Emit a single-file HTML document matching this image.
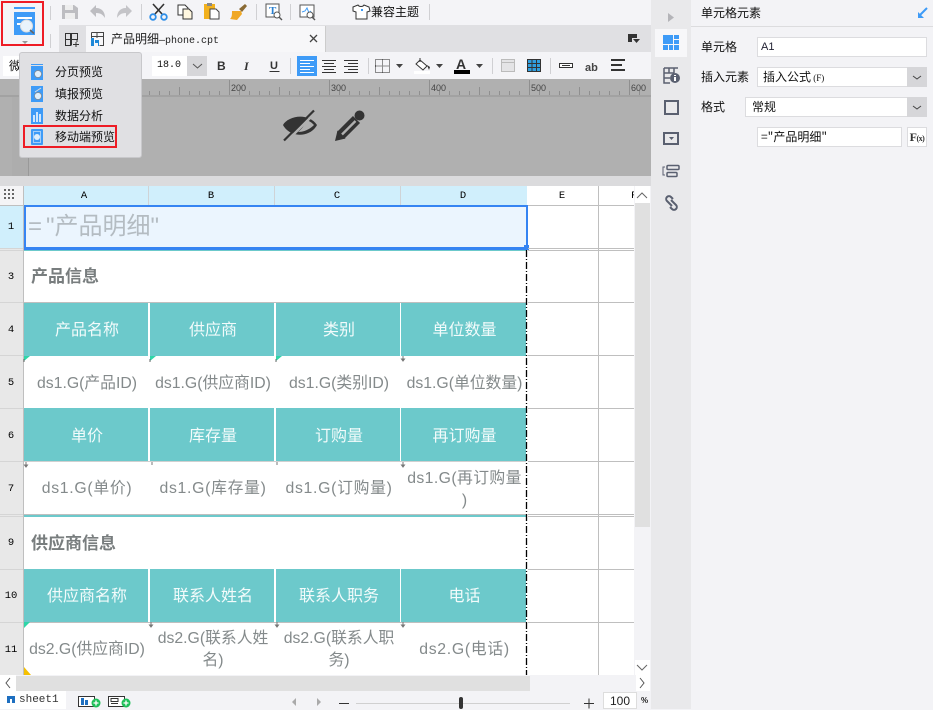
<!DOCTYPE html>
<html><head><meta charset="utf-8">
<style>
html,body{margin:0;padding:0;width:933px;height:709px;overflow:hidden;background:#f3f3f6;font-family:"Liberation Sans","Noto Sans CJK SC",sans-serif}
div,span{position:absolute;box-sizing:border-box}
svg{position:absolute;overflow:visible}
.r{background:#bfbfbf}
.h{left:24px;width:502px;height:53px;background:#6cc9cb}
.sep{width:2px;background:#fff}
.c{text-align:center;white-space:nowrap;color:#848a8b;font-size:15.8px;line-height:20px;height:20px;padding-left:2px}
.w{text-align:center;white-space:nowrap;color:#f2fbfb;font-size:16px;line-height:20px;height:20px;padding-left:2px}
.rn{left:0;width:22px;text-align:center;font:10.5px/14px "Liberation Mono",monospace;color:#000;height:14px}
.cn{top:190px;text-align:center;font:10.5px/12px "Liberation Mono",monospace;color:#000;height:12px}
.b{font-weight:700;font-size:17px;color:#787d7e;white-space:nowrap;line-height:20px;height:20px}
.vs{width:1px;background:#d0d0d3}
.m{font:12px/16px "WenQuanYi Zen Hei","Noto Sans CJK SC",sans-serif;color:#111;height:16px;white-space:nowrap}
.lab{font:12px/16px "WenQuanYi Zen Hei","Noto Sans CJK SC",sans-serif;color:#111;height:16px;white-space:nowrap}
.rul{top:83px;font:9px/10px "Liberation Sans",sans-serif;color:#444;height:10px}
.sel{background:#fff;border:1px solid #dcdcdf}
.ar{background:#d6d6d9}
</style></head><body>

<!-- top toolbar -->
<div style="left:0;top:0;width:651px;height:25px;background:#f4f4f7"></div>
<div style="left:59px;top:25px;width:592px;height:27px;background:#e0e0e3"></div>
<div style="left:0;top:25px;width:59px;height:27px;background:#f4f4f7"></div>
<div style="left:86px;top:26px;width:240px;height:27px;background:#f7f7f9;border-right:1px solid #ccc"></div>
<div style="left:0;top:52px;width:651px;height:27px;background:#f4f4f7"></div>

<!-- preview icon -->
<div style="left:1px;top:1px;width:43px;height:45px;border:2px solid #ee1c25;background:#f4f4f7"></div>
<div style="left:14px;top:7px;width:21px;height:2px;background:#3e9bf7"></div>
<div style="left:14px;top:12px;width:21px;height:23px;background:#3e9bf7"></div>
<div style="left:17px;top:17px;width:15px;height:1.5px;background:#fff"></div>
<div style="left:17px;top:23px;width:5px;height:1.5px;background:#fff"></div>
<svg style="left:0;top:0" width="50" height="50"><circle cx="26.500" cy="26" r="6" fill="#e9f3fc" stroke="#ddd" stroke-width="1"/><path d="M30 30l4 3.500" stroke="#666" stroke-width="1.600"/><path d="M22 41h6l-3 3z" fill="#999"/></svg>
<div class="vs" style="left:50px;top:6px;height:14px"></div>
<div class="vs" style="left:50px;top:34px;height:14px"></div>

<!-- toolbar icons -->
<svg style="left:0;top:0" width="480" height="25">
<path d="M62 5h12l4 3v11H62z" fill="#bdbdc1"/><rect x="65" y="5" width="8" height="5" fill="#eee"/><rect x="65" y="13" width="10" height="6" fill="#eee"/>
<path d="M90 11l6-6v3c6 0 9 4 9 10-2-3-4-5-9-5v4z" fill="#bdbdc1"/>
<path d="M132 11l-6-6v3c-6 0-9 4-9 10 2-3 4-5 9-5v4z" fill="#c4c4c8"/>
<path d="M153 4l9 10M164 4l-9 10" stroke="#333" stroke-width="1.600" fill="none"/>
<circle cx="153" cy="17" r="2.800" fill="none" stroke="#2f8fe8" stroke-width="1.800"/><circle cx="164" cy="17" r="2.800" fill="none" stroke="#2f8fe8" stroke-width="1.800"/>
<path d="M178 5h7l3 3v7h-10z" fill="#fff" stroke="#333"/><path d="M183 9h6l3 3v7h-9z" fill="#fff7e0" stroke="#333"/>
<path d="M204 4h11v15h-11z" fill="#f2b11d"/><rect x="207" y="3" width="5" height="3" fill="#888"/><path d="M210 9h6l3 3v7h-9z" fill="#fff" stroke="#444"/>
<path d="M239 9l6-5 2 2-5 6z" fill="#8a6a34"/><path d="M232 11l9 0 1 3-5 6-7-1c2-2 2-4 2-8z" fill="#f0a825"/>
<rect x="266" y="4" width="13" height="13" fill="#fff" stroke="#555"/><text x="269" y="14" font-family="Liberation Serif" font-size="11" font-weight="700" fill="#2a7fd0">T</text><circle cx="277" cy="15" r="3" fill="#fff" stroke="#555"/><path d="M279 17l3 3" stroke="#555" stroke-width="1.400"/>
<rect x="300" y="5" width="14" height="12" fill="#fff" stroke="#555"/><path d="M302 12l3-1 2-3 2 5 2-2" stroke="#3e9bf7" fill="none"/><circle cx="310" cy="15" r="3" fill="#fff" stroke="#555"/><path d="M312 17l3 3" stroke="#555" stroke-width="1.400"/>
<path d="M353 7l5-2c1 2 5 2 6 0l5 2 1 4-3 1v7h-11v-7l-3-1z" fill="#fff" stroke="#333"/><rect x="361" y="9" width="2" height="2" fill="#3e9bf7"/>
</svg>
<div class="vs" style="left:141px;top:4px;height:16px"></div>
<div class="vs" style="left:256px;top:4px;height:16px"></div>
<div class="vs" style="left:290px;top:4px;height:16px"></div>
<div class="vs" style="left:429px;top:4px;height:16px"></div>
<div class="m" style="left:371px;top:4px">兼容主题</div>

<!-- tab row -->
<svg style="left:0;top:0" width="120" height="52">
<path d="M65.500 33.500h12v6h-12zM65.500 39.500v6h5v-12M71.500 33.500v12M77 39v3M73 44.500h6M76 42v5" fill="none" stroke="#333"/>
<path d="M91.500 32.500h12v13h-4M91.500 36.500h12M91.500 32.500v6M97 33v5" fill="none" stroke="#444"/>
<path d="M91 38h3v8h-3zM95 40h4v6h-1v-3h-3z" fill="#1e88d8"/>
</svg>
<div class="m" style="left:111px;top:31px;color:#222">产品明细<span style="position:static;font-family:'Liberation Mono',monospace;font-size:10px">—phone.cpt</span></div>
<svg style="left:0;top:0" width="650" height="52"><path d="M310 35l7 7M317 35l-7 7" stroke="#444" stroke-width="1.300"/><path d="M628 34h9v4h-5v4h-4z" fill="#333"/><path d="M633 39h7l-3.500 4z" fill="#333"/></svg>

<!-- format toolbar -->
<div style="left:3px;top:56px;width:60px;height:20px;background:#fff"></div>
<div class="m" style="left:9px;top:58px">微</div>
<div style="left:152px;top:56px;width:35px;height:20px;background:#fff"></div>
<div style="left:157px;top:59px;font:10px/14px 'Liberation Mono',monospace;color:#111">18.0</div>
<div style="left:187px;top:56px;width:20px;height:20px;background:#d6d6d9"></div>
<svg style="left:0;top:0" width="650" height="79">
<path d="M193 64l4.500 4 4.500-4" fill="none" stroke="#555"/>
<text x="217" y="70" font-family="Liberation Sans" font-weight="700" font-size="12" fill="#333">B</text>
<text x="244" y="70" font-family="Liberation Serif" font-style="italic" font-weight="700" font-size="12" fill="#333">I</text>
<text x="270" y="69" font-family="Liberation Sans" font-weight="700" font-size="11" fill="#333">U</text><path d="M269.500 71.500h10" stroke="#333"/>
<rect x="297" y="56" width="20" height="20" fill="#3e9bf7"/>
<path d="M300 60.500h14M300 63.500h10M300 66.500h14M300 69.500h10M300 72.500h14" stroke="#fff"/>
<path d="M322 60.500h14M324 63.500h10M322 66.500h14M324 69.500h10M322 72.500h14" stroke="#333"/>
<path d="M344 60.500h14M348 63.500h10M344 66.500h14M348 69.500h10M344 72.500h14" stroke="#333"/>
<path d="M375.500 59.500h14v13h-14zM382.500 59.500v13M375.500 66h14" fill="none" stroke="#222" stroke-dasharray="1 1"/>
<path d="M396 64h7l-3.500 4zM436 64h7l-3.500 4zM476 64h7l-3.500 4z" fill="#444"/>
<rect x="414" y="71" width="16" height="3" fill="#fff"/>
<path d="M420 60l7 6-4 4-7-6zM420 58v4" fill="#fff" stroke="#333"/><path d="M427 65l3 2-1 3z" fill="#333"/>
<rect x="454" y="70" width="16" height="4" fill="#000"/>
<text x="456" y="69" font-family="Liberation Sans" font-weight="700" font-size="14" fill="#333">A</text>
<rect x="501.500" y="59.500" width="13" height="12" fill="#e4e4e6" stroke="#bbb"/><path d="M502 62.500h12" stroke="#bbb"/>
<rect x="527.500" y="59.500" width="13" height="12" fill="#2f9fe0" stroke="#333"/><path d="M527 63.500h13M527 67.500h13M532 59v12M536.500 59v12" stroke="#333"/>
<rect x="559.500" y="63.500" width="13" height="4" fill="#fff" stroke="#333"/><path d="M562 65.500h8" stroke="#333"/>
<text x="585" y="71" font-family="Liberation Sans" font-weight="700" font-size="11" fill="#444">ab</text>
<path d="M611 60h14M611 65h11M611 70h14" stroke="#333" stroke-width="2"/>
</svg>
<div class="vs" style="left:290px;top:58px;height:16px"></div>
<div class="vs" style="left:368px;top:58px;height:16px"></div>
<div class="vs" style="left:492px;top:58px;height:16px"></div>
<div class="vs" style="left:550px;top:58px;height:16px"></div>

<!-- ruler + design area -->
<div style="left:0;top:79px;width:651px;height:97px;background:#b0b0b0"></div>
<div style="left:0;top:95px;width:651px;height:2px;background:#a2a2a2"></div>
<svg style="left:0;top:79px" width="650" height="17">
<path d="M129.500 8v8M139.500 12v4M149.500 12v4M159.500 12v4M169.500 12v4M179.500 8v8M189.500 12v4M199.500 12v4M209.500 12v4M219.500 12v4M229.500 1v15M239.500 12v4M249.500 12v4M259.500 12v4M269.500 12v4M279.500 8v8M289.500 12v4M299.500 12v4M309.500 12v4M319.500 12v4M329.500 1v15M339.500 12v4M349.500 12v4M359.500 12v4M369.500 12v4M379.500 8v8M389.500 12v4M399.500 12v4M409.500 12v4M419.500 12v4M429.500 1v15M439.500 12v4M449.500 12v4M459.500 12v4M469.500 12v4M479.500 8v8M489.500 12v4M499.500 12v4M509.500 12v4M519.500 12v4M529.500 1v15M539.500 12v4M549.500 12v4M559.500 12v4M569.500 12v4M579.500 8v8M589.500 12v4M599.500 12v4M609.500 12v4M619.500 12v4M629.500 1v15M639.500 12v4" stroke="#8f8f8f"/>
</svg>
<div class="rul" style="left:231px">200</div>
<div class="rul" style="left:331px">300</div>
<div class="rul" style="left:431px">400</div>
<div class="rul" style="left:531px">500</div>
<div class="rul" style="left:631px;width:19px;overflow:hidden">600</div>
<div style="left:12px;top:97px;width:17px;height:79px;background:#adadad;border-right:1px solid #999"></div>
<svg style="left:0;top:0" width="400" height="150">
<path d="M283 125C288 116 308 112 317 125C310 138 290 138 283 125z" fill="#333"/>
<path d="M306 120C310 121 312 123 314 125C309 130 303 132 298 132C302 129 305 125 306 120z" fill="#b0b0b0"/>
<path d="M287.500 140.500l29-29" stroke="#b0b0b0" stroke-width="2.500"/>
<path d="M284 140.500l30-30" stroke="#333" stroke-width="2.200"/>
<path d="M335 141l2.500-10.500 8 8z" fill="#333"/>
<path d="M340.500 135.500l16-16" stroke="#333" stroke-width="10"/>
<path d="M342 134.500l13.500-13.500" stroke="#b0b0b0" stroke-width="2.400"/>
<circle cx="359.500" cy="115.500" r="5" fill="#333"/>
</svg>
<div style="left:0;top:176px;width:651px;height:10px;background:#dbdbdd"></div>

<!-- popup menu -->
<div style="left:19px;top:52px;width:123px;height:106px;background:#e0e0e3;border:1px solid #c8c8cb;border-radius:3px"></div>
<svg style="left:0;top:0" width="50" height="160">
<rect x="31" y="64" width="12" height="1" fill="#3e9bf7"/><rect x="31" y="66" width="12" height="14" fill="#3e9bf7"/><circle cx="38" cy="74" r="3.500" fill="#dfeefb" stroke="#888" stroke-width=".7"/>
<rect x="31" y="86" width="12" height="16" fill="#3e9bf7"/><circle cx="38" cy="96" r="3.500" fill="#dfeefb" stroke="#888" stroke-width=".7"/><path d="M35 92l6-4" stroke="#ddd"/>
<rect x="31" y="108" width="12" height="16" fill="#3e9bf7"/><path d="M34 115v7M37 112v10M40 114v8" stroke="#fff" stroke-width="1.500"/>
<rect x="31" y="129" width="12" height="16" rx="1" fill="#3e9bf7"/><rect x="33.500" y="131.500" width="7" height="11" fill="none" stroke="#cfe4f9" stroke-width=".7"/><circle cx="37" cy="137" r="3" fill="#dfeefb"/>
</svg>
<div class="m" style="left:55px;top:64px">分页预览</div>
<div class="m" style="left:55px;top:86px">填报预览</div>
<div class="m" style="left:55px;top:108px">数据分析</div>
<div class="m" style="left:55px;top:129px">移动端预览</div>
<div style="left:23px;top:125px;width:94px;height:23px;border:2px solid #ee1c25"></div>

<!-- grid -->
<div style="left:0;top:186px;width:634px;height:489px;background:#fff"></div>
<div style="left:0;top:186px;width:23px;height:489px;background:#e8e8e8"></div>
<div style="left:23px;top:186px;width:1px;height:489px;background:#bfbfbf"></div>
<div style="left:0;top:186px;width:23px;height:19px;background:#f4f4f6"></div>
<svg style="left:0;top:186px" width="23" height="19"><path d="M4 7h2v2H4zM8 7h2v2H8zM12 7h2v2h-2zM4 11h2v2H4zM8 11h2v2H8zM12 11h2v2h-2zM4 15h0" fill="#666"/><path d="M4 3h2v2H4zM8 3h2v2H8zM12 3h2v2h-2z" fill="#666"/></svg>
<div style="left:24px;top:186px;width:503px;height:19px;background:#d0effc"></div>
<div style="left:148px;top:186px;width:1px;height:19px;background:#cfd3d6"></div>
<div style="left:274px;top:186px;width:1px;height:19px;background:#cfd3d6"></div>
<div style="left:400px;top:186px;width:1px;height:19px;background:#cfd3d6"></div>
<div style="left:527px;top:186px;width:107px;height:19px;background:#fff"></div>
<div style="left:598px;top:186px;width:1px;height:489px;background:#bfbfbf"></div>
<div class="cn" style="left:24px;width:120px">A</div>
<div class="cn" style="left:149px;width:124px">B</div>
<div class="cn" style="left:275px;width:124px">C</div>
<div class="cn" style="left:401px;width:124px">D</div>
<div class="cn" style="left:527px;width:70px">E</div>
<div class="cn" style="left:631px;width:4px;overflow:hidden;text-align:left">F</div>
<div style="left:0;top:205px;width:634px;height:1px;background:#bfbfbf"></div>

<!-- row 1 -->
<div style="left:0;top:206px;width:23px;height:43px;background:#d0effc"></div>
<div style="left:24px;top:205px;width:504px;height:45px;background:#ebf5fe;border:2px solid #3584f2;border-width:2px 2px 3px 2px"></div>
<div style="left:28px;top:212px;font-size:24px;line-height:30px;color:#b4bcc2;white-space:nowrap"><span style="position:static;letter-spacing:4px">=</span>&quot;产品明细&quot;</div>
<div style="left:524px;top:245px;width:5px;height:5px;background:#3584f2"></div>

<!-- h lines right -->
<div class="r" style="left:528px;top:248px;width:106px;height:1px"></div>
<div class="r" style="left:528px;top:250px;width:106px;height:1px"></div>
<div class="r" style="left:528px;top:302px;width:106px;height:1px"></div>
<div class="r" style="left:528px;top:355px;width:106px;height:1px"></div>
<div class="r" style="left:528px;top:408px;width:106px;height:1px"></div>
<div class="r" style="left:528px;top:461px;width:106px;height:1px"></div>
<div class="r" style="left:528px;top:514px;width:106px;height:1px"></div>
<div class="r" style="left:528px;top:516px;width:106px;height:1px"></div>
<div class="r" style="left:528px;top:569px;width:106px;height:1px"></div>
<div class="r" style="left:528px;top:622px;width:106px;height:1px"></div>
<div style="left:24px;top:250px;width:503px;height:1px;background:#6cc9cb"></div>

<!-- row dividers -->
<div style="left:0;top:248px;width:23px;height:1px;background:#d5d5d5"></div>
<div style="left:0;top:250px;width:23px;height:1px;background:#d5d5d5"></div>
<div style="left:0;top:302px;width:23px;height:1px;background:#d5d5d5"></div>
<div style="left:0;top:355px;width:23px;height:1px;background:#d5d5d5"></div>
<div style="left:0;top:408px;width:23px;height:1px;background:#d5d5d5"></div>
<div style="left:0;top:461px;width:23px;height:1px;background:#d5d5d5"></div>
<div style="left:0;top:514px;width:23px;height:1px;background:#d5d5d5"></div>
<div style="left:0;top:516px;width:23px;height:1px;background:#d5d5d5"></div>
<div style="left:0;top:569px;width:23px;height:1px;background:#d5d5d5"></div>
<div style="left:0;top:622px;width:23px;height:1px;background:#d5d5d5"></div>

<div class="rn" style="top:220px">1</div>
<div class="rn" style="top:270px">3</div>
<div class="rn" style="top:323px">4</div>
<div class="rn" style="top:376px">5</div>
<div class="rn" style="top:429px">6</div>
<div class="rn" style="top:482px">7</div>
<div class="rn" style="top:536px">9</div>
<div class="rn" style="top:589px">10</div>
<div class="rn" style="top:643px">11</div>

<!-- section titles -->
<div class="b" style="left:31px;top:267px">产品信息</div>
<div class="b" style="left:31px;top:534px">供应商信息</div>

<!-- teal rows -->
<div style="left:24px;top:302px;width:503px;height:1px;background:#bfbfbf"></div>
<div class="h" style="top:303px"></div>
<div class="h" style="top:408px"></div>
<div class="h" style="top:569px"></div>
<div style="left:24px;top:515px;width:502px;height:2px;background:#6cc9cb"></div>
<div style="left:24px;top:514px;width:502px;height:1px;background:#bfbfbf"></div>
<div style="left:24px;top:461px;width:502px;height:1px;background:#d0d0d0"></div>
<div style="left:24px;top:622px;width:502px;height:1px;background:#bfbfbf"></div>
<div class="sep" style="left:148px;top:303px;height:53px"></div>
<div class="sep" style="left:274px;top:303px;height:53px"></div>
<div class="sep" style="left:400px;top:303px;height:53px;width:1px"></div>
<div class="sep" style="left:148px;top:408px;height:53px"></div>
<div class="sep" style="left:274px;top:408px;height:53px"></div>
<div class="sep" style="left:400px;top:408px;height:53px;width:1px"></div>
<div class="sep" style="left:148px;top:569px;height:53px"></div>
<div class="sep" style="left:274px;top:569px;height:53px"></div>
<div class="sep" style="left:400px;top:569px;height:53px;width:1px"></div>

<!-- row 4 -->
<div class="w" style="left:24px;width:124px;top:321px">产品名称</div>
<div class="w" style="left:150px;width:124px;top:321px">供应商</div>
<div class="w" style="left:276px;width:124px;top:321px">类别</div>
<div class="w" style="left:401px;width:125px;top:321px">单位数量</div>
<!-- row 5 -->
<div class="c" style="left:24px;width:124px;top:374px">ds1.G(产品ID)</div>
<div class="c" style="left:150px;width:124px;top:374px">ds1.G(供应商ID)</div>
<div class="c" style="left:276px;width:124px;top:374px">ds1.G(类别ID)</div>
<div class="c" style="left:401px;width:125px;top:374px">ds1.G(单位数量)</div>
<!-- row 6 -->
<div class="w" style="left:24px;width:124px;top:427px">单价</div>
<div class="w" style="left:150px;width:124px;top:427px">库存量</div>
<div class="w" style="left:276px;width:124px;top:427px">订购量</div>
<div class="w" style="left:401px;width:125px;top:427px">再订购量</div>
<!-- row 7 -->
<div class="c" style="left:24px;width:124px;top:479px;letter-spacing:.7px">ds1.G(单价)</div>
<div class="c" style="left:150px;width:124px;top:479px;letter-spacing:.7px">ds1.G(库存量)</div>
<div class="c" style="left:276px;width:124px;top:479px;letter-spacing:.7px">ds1.G(订购量)</div>
<div class="c" style="left:401px;width:125px;top:469px;letter-spacing:.4px;overflow:hidden">ds1.G(再订购量</div>
<div class="c" style="left:401px;width:125px;top:491px">)</div>
<!-- row 10 -->
<div class="w" style="left:24px;width:124px;top:587px">供应商名称</div>
<div class="w" style="left:150px;width:124px;top:587px">联系人姓名</div>
<div class="w" style="left:276px;width:124px;top:587px">联系人职务</div>
<div class="w" style="left:401px;width:125px;top:587px">电话</div>
<!-- row 11 -->
<div class="c" style="left:24px;width:124px;top:640px">ds2.G(供应商ID)</div>
<div class="c" style="left:150px;width:124px;top:629px">ds2.G(联系人姓</div>
<div class="c" style="left:150px;width:124px;top:651px">名)</div>
<div class="c" style="left:276px;width:124px;top:629px">ds2.G(联系人职</div>
<div class="c" style="left:276px;width:124px;top:651px">务)</div>
<div class="c" style="left:401px;width:125px;top:640px;letter-spacing:.7px">ds2.G(电话)</div>

<!-- markers -->
<svg style="left:0;top:0" width="650" height="709">
<path d="M24 356h6l-6 5zM150 356h6l-6 5zM276 356h6l-6 5zM24 622h6l-6 6z" fill="#2fd6a8"/>
<path d="M24 359v3M150 359v3M276 359v3" stroke="#666"/>
<path d="M403 356v4M401.500 359h3l-1.500 2zM26 462v4M24.500 465h3l-1.500 2zM152 462v3M277 462v3M403 462v4M401.500 465h3l-1.500 2zM151 622v4M149.500 625h3l-1.500 2zM277 622v4M275.500 625h3l-1.500 2zM403 622v4M401.500 625h3l-1.500 2z" stroke="#777" fill="#777"/>
<path d="M24 667l7 8h-7z" fill="#f5c000"/>
<path d="M526.500 250V675" stroke="#000" stroke-width="1.300" stroke-dasharray="7 2 1 2"/>
</svg>

<!-- scrollbars -->
<div style="left:634px;top:186px;width:17px;height:489px;background:#f3f3f6"></div>
<div style="left:635px;top:186px;width:15px;height:17px;background:#fff"></div>
<div style="left:635px;top:203px;width:15px;height:324px;background:#e0e0e0"></div>
<div style="left:635px;top:660px;width:15px;height:15px;background:#fff"></div>
<svg style="left:630px;top:186px" width="20" height="20"><path d="M7 12l5-5 5 5" fill="none" stroke="#666"/></svg>
<svg style="left:630px;top:660px" width="20" height="15"><path d="M7 5l5 5 5-5" fill="none" stroke="#666"/></svg>
<div style="left:0;top:675px;width:651px;height:16px;background:#f3f3f6"></div>
<div style="left:0;top:675px;width:16px;height:16px;background:#fff"></div>
<div style="left:16px;top:676px;width:514px;height:15px;background:#e0e0e0"></div>
<div style="left:636px;top:675px;width:14px;height:16px;background:#fff"></div>
<svg style="left:0;top:675px" width="650" height="16"><path d="M10 3l-4 5 4 5" fill="none" stroke="#555"/><path d="M640 3l4 5-4 5" fill="none" stroke="#555"/></svg>

<!-- bottom bar -->
<div style="left:0;top:691px;width:651px;height:18px;background:#f3f3f6"></div>
<div style="left:0;top:691px;width:66px;height:18px;background:#fff"></div>
<svg style="left:0;top:693px" width="650" height="16">
<path d="M7 3h8v7h-3V6h-2v4H7z" fill="#1e6fc0"/>
<rect x="78.500" y="3.500" width="16" height="10" fill="#fff" stroke="#333"/><path d="M81 5h3v7h-3zM85 7h3v5h-3z" fill="#1e6fc0"/><circle cx="96" cy="10" r="4.500" fill="#1fc05a"/><path d="M93.500 10h5M96 7.500v5" stroke="#fff" stroke-width="1.300"/>
<rect x="108.500" y="3.500" width="16" height="10" fill="#fff" stroke="#333"/><path d="M111 5.500h7v3h-7zM111 10.500h7" fill="none" stroke="#333"/><circle cx="126" cy="10" r="4.500" fill="#1fc05a"/><path d="M123.500 10h5M126 7.500v5" stroke="#fff" stroke-width="1.300"/>
<path d="M296 5l-4 4 4 4zM317 5l4 4-4 4z" fill="#aaa"/>
<path d="M339 10.500h10" stroke="#333"/><path d="M356 10.500h214" stroke="#d0d0d0"/>
<rect x="459" y="4" width="4" height="12" rx="2" fill="#333"/>
<path d="M584 10.500h10M589 5.500v10" stroke="#333"/>
</svg>
<div style="left:19px;top:693px;font:11px/14px 'Liberation Mono',monospace;color:#333">sheet1</div>
<div style="left:603px;top:692px;width:34px;height:17px;background:#fff;border:1px solid #ddd;font-size:12px;line-height:17px;text-align:center;color:#222">100</div>
<div style="left:641px;top:695px;font-size:8px;font-weight:700;line-height:12px;color:#222">%</div>

<!-- side strip -->
<div style="left:651px;top:0;width:40px;height:709px;background:#e9e9eb"></div>
<div style="left:655px;top:29px;width:32px;height:28px;background:#f7f7f9"></div>
<svg style="left:650px;top:0" width="41" height="220">
<path d="M18 13l6 4.500-6 4.500z" fill="#b4b4b8"/>
<path d="M13 35h10v9H13zM24 35h5v4h-5zM24 40h5v4h-5zM13 45h5v5h-5zM19 45h4v5h-4zM24 45h5v5h-5z" fill="#3e9bf7"/>
<path d="M14 68h14M14 68v15h6M14 73h10M14 78h6M19 68v5M24 68v5" fill="none" stroke="#5a6070" stroke-width="1.500"/>
<circle cx="25" cy="78" r="5" fill="#5a6070"/><rect x="24" y="77" width="2" height="4" fill="#fff"/><rect x="24" y="75" width="2" height="1" fill="#fff"/>
<rect x="15" y="101" width="13" height="13" fill="none" stroke="#5a6070" stroke-width="2"/>
<rect x="14" y="100" width="2" height="2" fill="#5a6070"/><rect x="27" y="113" width="2" height="2" fill="#5a6070"/>
<rect x="14" y="133" width="14" height="11" fill="none" stroke="#5a6070" stroke-width="2"/><path d="M19 137h5l-2.500 3z" fill="#5a6070"/>
<path d="M15 167h-2v8h2" fill="none" stroke="#5a6070"/><rect x="17" y="165.500" width="12" height="4" rx="1" fill="none" stroke="#5a6070" stroke-width="1.500"/><rect x="17" y="172.500" width="10" height="4" rx="1" fill="none" stroke="#5a6070" stroke-width="1.500"/>
<path d="M22 206l-5-5a2.800 2.800 0 0 1 4-4l2 2M21 200l5 5a2.800 2.800 0 0 1-4 4l-2-2" fill="none" stroke="#5a6070" stroke-width="2"/>
</svg>

<!-- right panel -->
<div style="left:691px;top:0;width:242px;height:709px;background:#f3f3f6"></div>
<div style="left:691px;top:26px;width:242px;height:1px;background:#dcdcde"></div>
<div class="lab" style="left:701px;top:5px">单元格元素</div>
<svg style="left:915px;top:5px" width="16" height="16"><path d="M12 3L5 10" stroke="#3e9bf7" stroke-width="2"/><path d="M3 7v6h6z" fill="#3e9bf7"/></svg>

<div class="lab" style="left:701px;top:39px">单元格</div>
<div class="sel" style="left:757px;top:37px;width:170px;height:20px;font-size:11px;line-height:18px;padding-left:3px;color:#223">A1</div>

<div class="lab" style="left:701px;top:69px">插入元素</div>
<div class="sel lab" style="left:757px;top:67px;width:150px;height:20px;line-height:18px;padding-left:5px;border-right:0">插入公式<span style="position:static;font-size:9px;font-family:'Liberation Serif',serif"> (F)</span></div>
<div class="ar" style="left:907px;top:67px;width:20px;height:20px"></div>

<div class="lab" style="left:701px;top:99px">格式</div>
<div class="sel lab" style="left:745px;top:97px;width:162px;height:20px;line-height:18px;padding-left:6px;border-right:0">常规</div>
<div class="ar" style="left:907px;top:97px;width:20px;height:20px"></div>
<svg style="left:907px;top:67px" width="20" height="50"><path d="M6 9l4 3 4-3M6 39l4 3 4-3" fill="none" stroke="#444"/></svg>

<div class="sel lab" style="left:757px;top:127px;width:145px;height:20px;line-height:18px;padding-left:3px">=&quot;产品明细&quot;</div>
<div class="sel" style="left:907px;top:127px;width:20px;height:20px;font:700 12px/18px 'Liberation Serif',serif;color:#333;text-align:center;white-space:nowrap;letter-spacing:-.5px">F<span style="position:static;font-size:8px">(x)</span></div>

</body></html>
